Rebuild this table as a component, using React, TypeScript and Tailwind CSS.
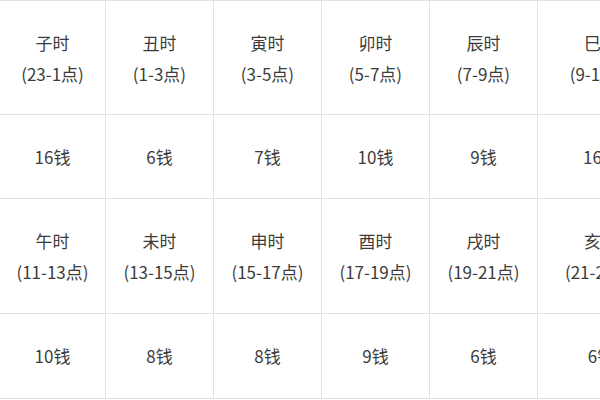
import React from 'react';

const hours = [
  { name: '子时', range: '(23-1点)', price: '16钱' },
  { name: '丑时', range: '(1-3点)', price: '6钱' },
  { name: '寅时', range: '(3-5点)', price: '7钱' },
  { name: '卯时', range: '(5-7点)', price: '10钱' },
  { name: '辰时', range: '(7-9点)', price: '9钱' },
  { name: '巳时', range: '(9-11点)', price: '16钱' },
  { name: '午时', range: '(11-13点)', price: '10钱' },
  { name: '未时', range: '(13-15点)', price: '8钱' },
  { name: '申时', range: '(15-17点)', price: '8钱' },
  { name: '酉时', range: '(17-19点)', price: '9钱' },
  { name: '戌时', range: '(19-21点)', price: '6钱' },
  { name: '亥时', range: '(21-23点)', price: '6钱' },
];

const App: React.FC = () => {
  const top = hours.slice(0, 6);
  const bottom = hours.slice(6);

  const headCell = (h: typeof hours[number]) => (
    <div key={h.name} className="bg-white flex flex-col items-center justify-center leading-[31px] whitespace-nowrap">
      <span>{h.name}</span>
      <span>{h.range}</span>
    </div>
  );
  const priceCell = (h: typeof hours[number]) => (
    <div key={h.name + 'p'} className="bg-white flex items-center justify-center whitespace-nowrap">
      {h.price}
    </div>
  );

  return (
    <div className="w-[600px] h-[400px] overflow-hidden bg-white">
      <div
        className="grid grid-cols-[105px_107px_107px_107px_107px_126px] grid-rows-[113px_83px_114px_84px] gap-px bg-[#e2e2e2] border-y border-[#e2e2e2] w-[664px] text-[17px] text-[#3c3c3c]"
        style={{ fontFamily: '"Noto Sans CJK SC", "Noto Sans", sans-serif' }}
      >
        {top.map(headCell)}
        {top.map(priceCell)}
        {bottom.map(headCell)}
        {bottom.map(priceCell)}
      </div>
    </div>
  );
};

export default App;
